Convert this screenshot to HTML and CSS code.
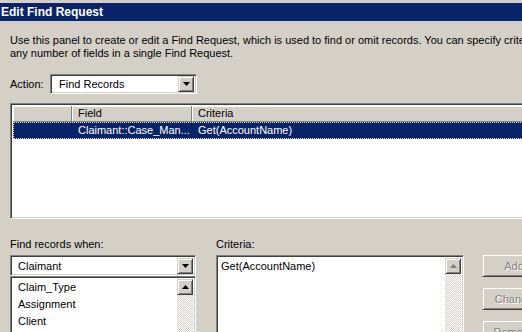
FILE: index.html
```html
<!DOCTYPE html>
<html lang="en">
<head>
  <meta charset="UTF-8" />
  <title>Edit Find Request</title>
  <link rel="stylesheet" href="styles.css">
</head>
<body>
  <div class="titlebar">Edit Find Request</div>

  <div class="panel">
    <p class="intro">Use this panel to create or edit a Find Request, which is used to find or omit records. You can specify criteria in<br>any number of fields in a single Find Request.</p>

    <div class="action-row">
      <span class="action-label">Action:</span>
      <div class="combo action-combo">
        <span class="combo-text">Find Records</span>
        <span class="arrow-btn">
          <svg width="7" height="4" viewBox="0 0 7 4"><polygon points="0,0 7,0 3.5,4" fill="#000"/></svg>
        </span>
      </div>
    </div>

    <div class="listview">
      <div class="lv-header">
        <div class="cell cell-icon"></div>
        <div class="cell cell-field">Field</div>
        <div class="cell cell-criteria">Criteria</div>
      </div>
      <div class="lv-row selected">
        <div class="cell cell-icon"></div>
        <div class="cell cell-field">Claimant::Case_Man...</div>
        <div class="cell cell-criteria">Get(AccountName)</div>
      </div>
    </div>

    <div class="lower">
      <div class="when">
        <div class="label">Find records when:</div>
        <div class="combo when-combo">
          <span class="combo-text">Claimant</span>
          <span class="arrow-btn">
            <svg width="7" height="4" viewBox="0 0 7 4"><polygon points="0,0 7,0 3.5,4" fill="#000"/></svg>
          </span>
        </div>
        <div class="listbox">
          <ul class="items">
            <li>Claim_Type</li>
            <li>Assignment</li>
            <li>Client</li>
          </ul>
          <div class="vscroll">
            <span class="arrow-btn">
              <svg width="7" height="4" viewBox="0 0 7 4"><polygon points="0,4 7,4 3.5,0" fill="#000"/></svg>
            </span>
          </div>
        </div>
      </div>

      <div class="criteria">
        <div class="label">Criteria:</div>
        <div class="textarea">
          <span class="textarea-text">Get(AccountName)</span>
          <div class="vscroll">
            <span class="arrow-btn">
              <svg width="7" height="4" viewBox="0 0 7 4"><polygon points="0,4 7,4 3.5,0" fill="#808080"/></svg>
            </span>
          </div>
        </div>
      </div>

      <div class="buttons">
        <button class="btn" disabled>Add</button>
        <button class="btn" disabled>Change</button>
        <button class="btn" disabled>Remove</button>
      </div>
    </div>
  </div>
</body>
</html>
```

FILE: styles.css
```css
body {
  margin: 0;
  background: #d4d0c8;
  font-family: "Liberation Sans", "DejaVu Sans", sans-serif;
  font-size: 11px;
  color: #000;
  overflow: hidden;
}
.titlebar {
  margin-top: 3px;
  height: 18px;
  line-height: 18px;
  padding-left: 1px;
  background: #0a246a;
  color: #fff;
  font-weight: bold;
  font-size: 12px;
}
.panel {
  width: 600px;
  padding-left: 10px;
}
.intro {
  margin: 13px 0 0;
  line-height: 13px;
  white-space: nowrap;
}

/* sunken and raised 3d edges */
.combo,
.listview,
.listbox,
.textarea {
  box-sizing: border-box;
  background: #fff;
  border: 1px solid;
  border-color: #808080 #fff #fff #808080;
  box-shadow: inset 1px 1px #404040, inset -1px -1px #d4d0c8;
}
.arrow-btn,
.btn {
  box-sizing: border-box;
  background: #d4d0c8;
  border: 1px solid;
  border-color: #d4d0c8 #404040 #404040 #d4d0c8;
  box-shadow: inset 1px 1px #fff, inset -1px -1px #808080;
}
.arrow-btn {
  width: 16px;
  height: 16px;
  display: flex;
  align-items: center;
  justify-content: center;
}

.action-row {
  display: flex;
  align-items: center;
  margin-top: 14px;
  height: 20px;
}
.action-label {
  width: 40px;
}
.combo {
  display: flex;
  align-items: center;
  padding: 2px;
}
.action-combo {
  width: 147px;
  height: 20px;
}
.combo-text {
  flex: 1;
  padding-left: 6px;
  white-space: nowrap;
}
.when-combo .combo-text {
  padding-left: 5px;
}

.listview {
  margin-top: 9px;
  width: 600px;
  height: 116px;
  padding: 2px;
}
.lv-header,
.lv-row {
  display: flex;
}
.lv-header {
  height: 16px;
  background: #d4d0c8;
}
.lv-header .cell {
  box-sizing: border-box;
  height: 16px;
  line-height: 15px;
  border-right: 1px solid #808080;
  border-bottom: 1px solid #808080;
  box-shadow: inset 1px 1px #fff;
}
.cell {
  padding-left: 6px;
  white-space: nowrap;
}
.cell-icon {
  width: 59px;
  padding: 0;
}
.cell-field {
  width: 120px;
  box-sizing: border-box;
}
.lv-header .cell-criteria,
.lv-row .cell-criteria {
  flex: 1;
}
.lv-row {
  box-sizing: border-box;
  height: 17px;
  line-height: 15px;
}
.lv-row .cell-icon {
  width: 58px;
}
.selected {
  background: #0a246a;
  color: #fff;
  border: 1px dotted #f3e7a8;
}

.lower {
  display: flex;
  align-items: flex-start;
  margin-top: 19px;
}
.label {
  line-height: 13px;
  margin-bottom: 4px;
  white-space: nowrap;
}
.when {
  width: 186px;
}
.when-combo {
  height: 21px;
}
.listbox {
  display: flex;
  height: 90px;
  padding: 2px;
}
.items {
  flex: 1;
  margin: 0;
  padding: 0 0 0 5px;
  list-style: none;
}
.items li {
  line-height: 17px;
}
.vscroll {
  width: 16px;
  background: repeating-conic-gradient(#fff 0 25%, #d4d0c8 0 50%) 0 0 / 2px 2px;
}
.criteria {
  width: 248px;
  margin-left: 20px;
}
.textarea {
  display: flex;
  height: 100px;
  padding: 2px;
}
.textarea-text {
  flex: 1;
  padding: 2px 0 0 2px;
  line-height: 13px;
}
.buttons {
  display: flex;
  flex-direction: column;
  gap: 10px;
  margin: 16px 0 0 18px;
}
.btn {
  width: 64px;
  height: 23px;
  padding: 0;
  font: inherit;
  color: #808080;
  text-shadow: 1px 1px #fff;
}
```
